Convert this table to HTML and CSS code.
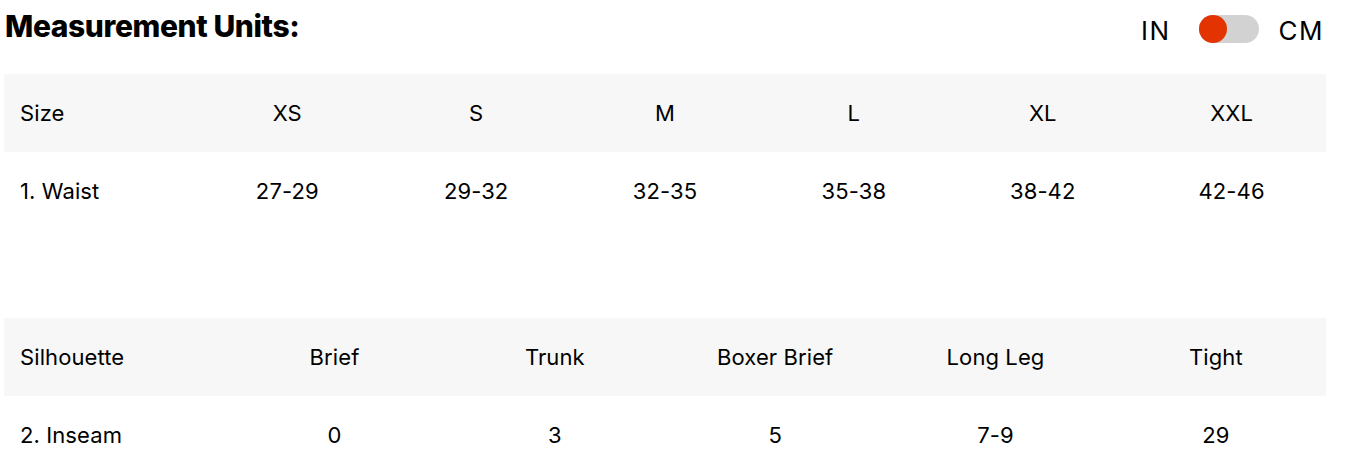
FILE: index.html
```html
<!DOCTYPE html>
<html lang="en">
<head>
<meta charset="utf-8">
<link rel="stylesheet" href="styles.css">
</head>
<body>
<div class="page">
  <div class="topbar">
    <h2 class="title">Measurement Units:</h2>
    <div class="units">
      <span class="unit">IN</span>
      <span class="switch"><span class="knob"></span></span>
      <span class="unit">CM</span>
    </div>
  </div>

  <div class="chart cols7">
    <div class="row head">
      <div class="cell label">Size</div>
      <div class="cell">XS</div>
      <div class="cell">S</div>
      <div class="cell">M</div>
      <div class="cell">L</div>
      <div class="cell">XL</div>
      <div class="cell">XXL</div>
    </div>
    <div class="row">
      <div class="cell label">1. Waist</div>
      <div class="cell">27-29</div>
      <div class="cell">29-32</div>
      <div class="cell">32-35</div>
      <div class="cell">35-38</div>
      <div class="cell">38-42</div>
      <div class="cell">42-46</div>
    </div>
  </div>

  <div class="chart cols6 second">
    <div class="row head">
      <div class="cell label">Silhouette</div>
      <div class="cell">Brief</div>
      <div class="cell">Trunk</div>
      <div class="cell">Boxer Brief</div>
      <div class="cell">Long Leg</div>
      <div class="cell">Tight</div>
    </div>
    <div class="row">
      <div class="cell label">2. Inseam</div>
      <div class="cell">0</div>
      <div class="cell">3</div>
      <div class="cell">5</div>
      <div class="cell">7-9</div>
      <div class="cell">29</div>
    </div>
  </div>
</div>
</body>
</html>
```

FILE: styles.css
```css
html, body {
  margin: 0;
  padding: 0;
  background: #fff;
}
body {
  font-family: Inter, "Liberation Sans", sans-serif;
  color: #000;
}
.page {
  width: 1322px;
  padding-left: 4px;
}
.topbar {
  height: 74px;
  display: flex;
  justify-content: space-between;
  align-items: flex-start;
}
.title {
  margin: 8px 0 0 1px;
  font-size: 30px;
  font-weight: 800;
  letter-spacing: -0.4px;
  line-height: 36px;
}
.units {
  display: flex;
  align-items: center;
  margin-top: 12px;
  margin-right: 2px;
}
.unit {
  font-size: 26px;
  letter-spacing: 1.5px;
  line-height: 28px;
  margin-top: 5px;
}
.switch {
  position: relative;
  display: block;
  width: 60px;
  height: 28px;
  border-radius: 14px;
  background: #d2d2d2;
  margin: 0 20px 0 28px;
}
.knob {
  position: absolute;
  left: 0;
  top: 0;
  width: 28px;
  height: 28px;
  border-radius: 50%;
  background: #e23300;
}
.chart .row {
  display: grid;
  height: 78px;
  align-items: center;
}
.cols7 .row { grid-template-columns: repeat(7, 1fr); }
.cols6 .row { grid-template-columns: repeat(6, 1fr); }
.row.head {
  background: #f7f7f7;
}
.second {
  margin-top: 88px;
}
.cell {
  font-size: 22px;
  text-align: center;
  letter-spacing: 0.1px;
}
.cell.label {
  text-align: left;
  padding-left: 16px;
}
```
